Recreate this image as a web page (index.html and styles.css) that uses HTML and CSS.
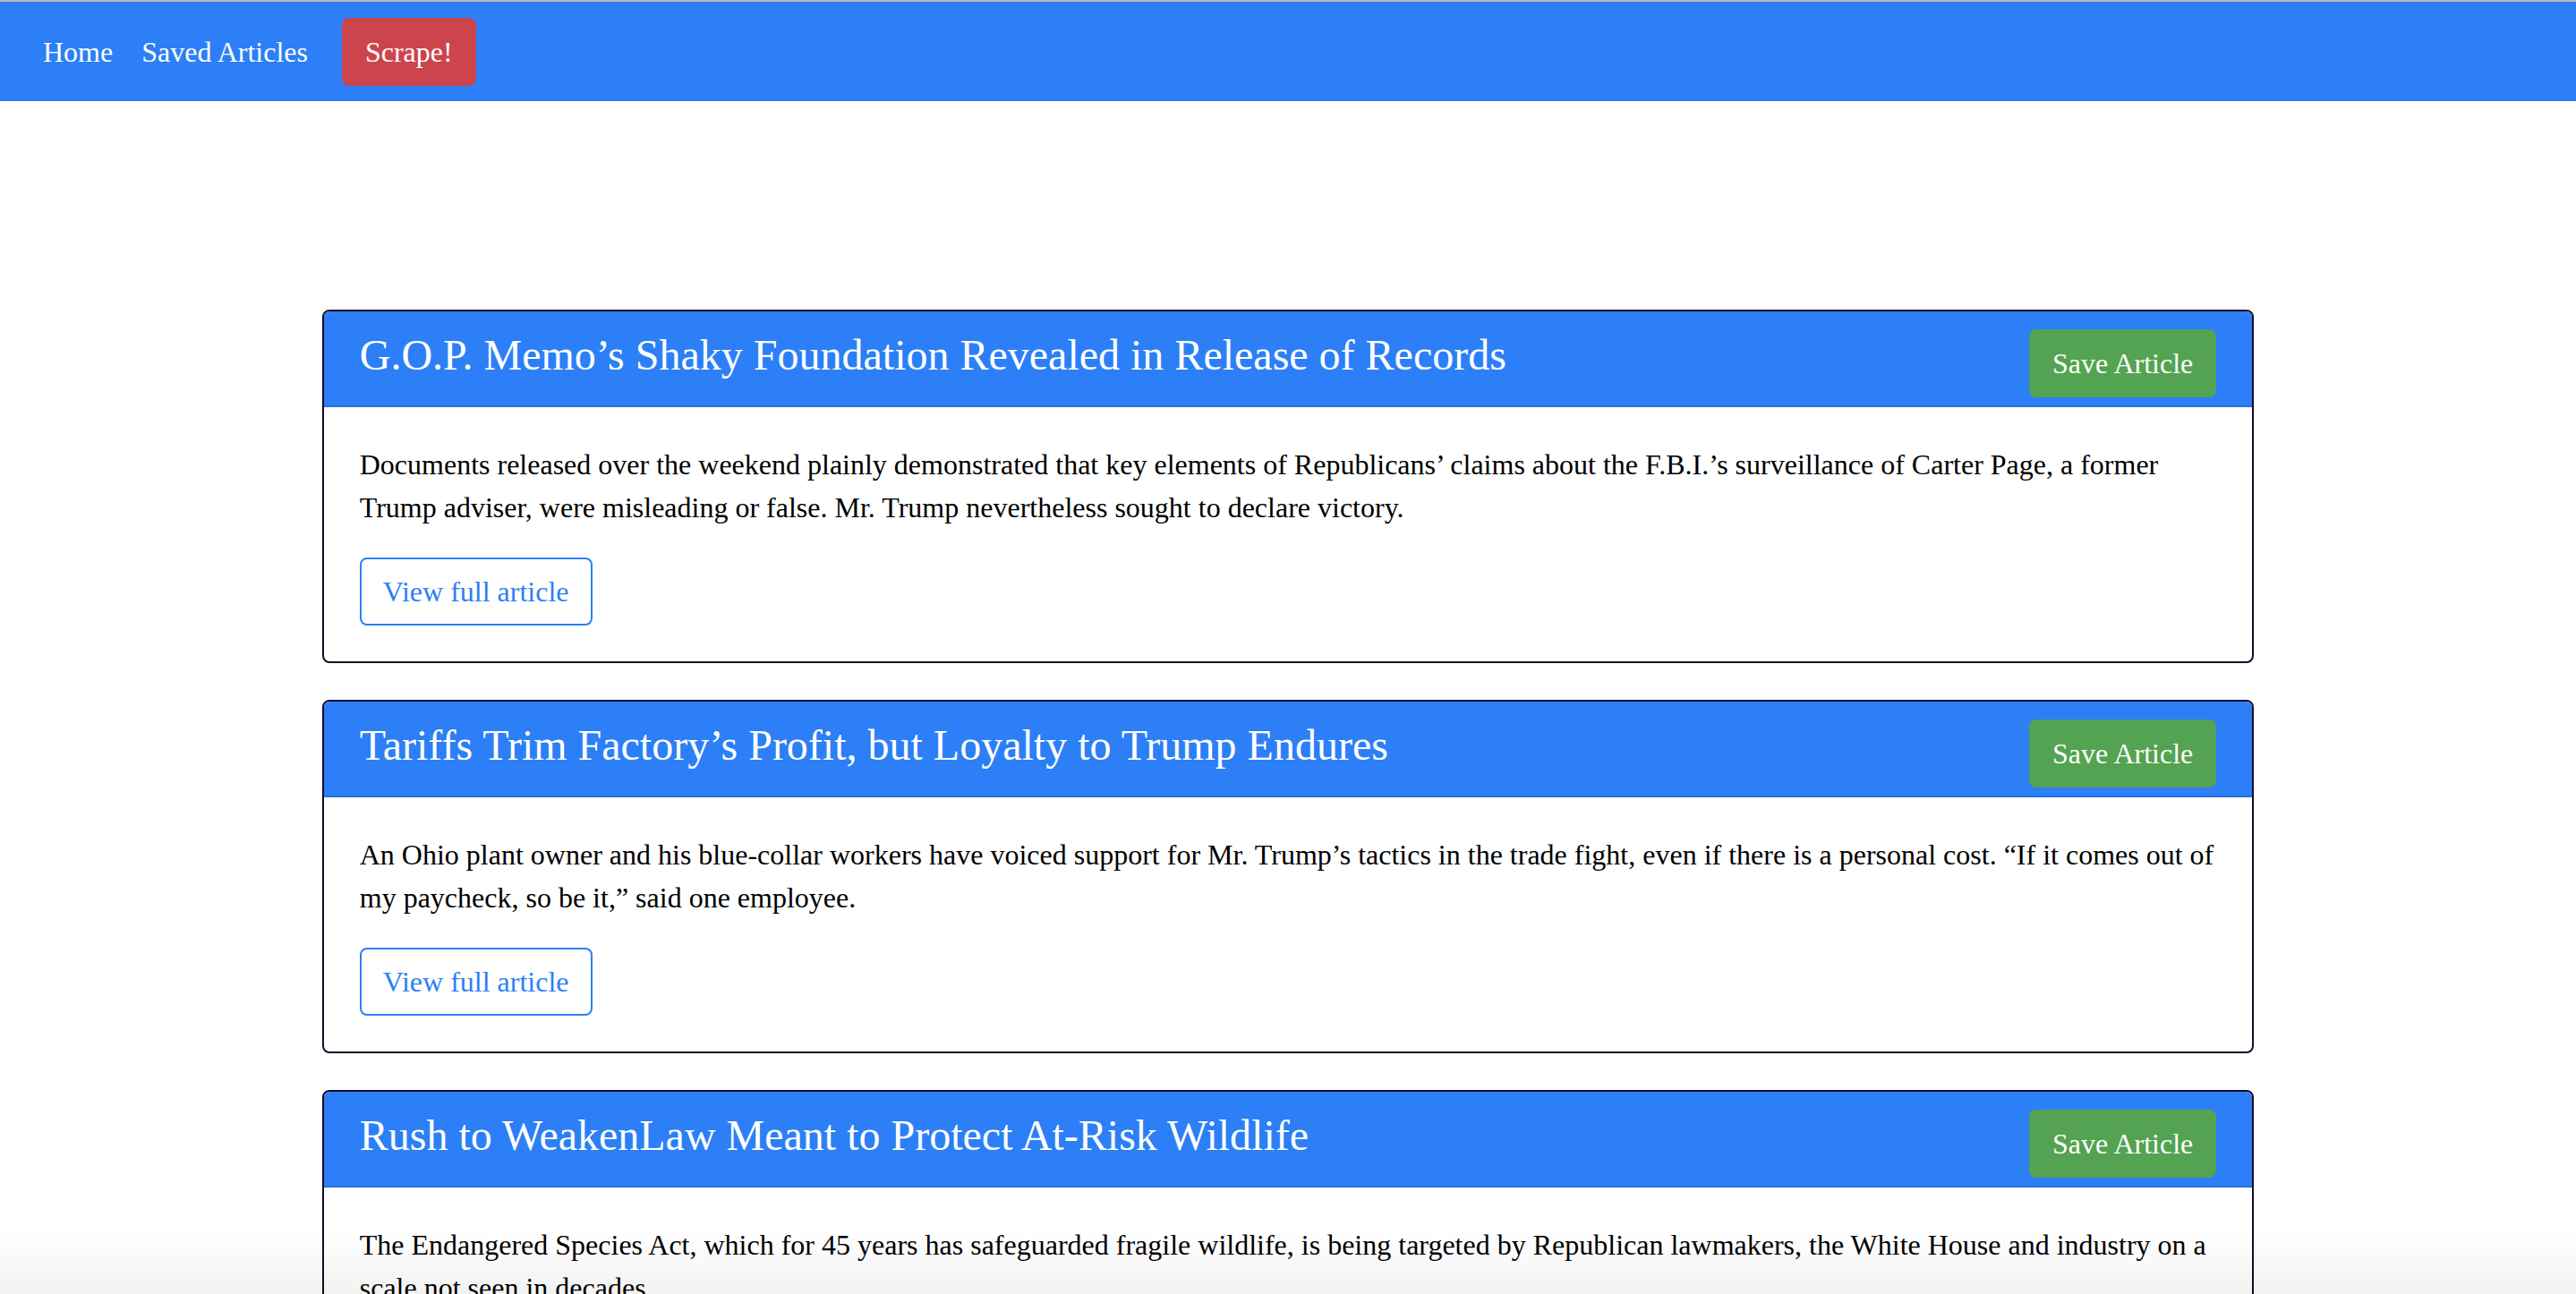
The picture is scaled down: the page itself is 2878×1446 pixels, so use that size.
FILE: index.html
```html
<!DOCTYPE html>
<html lang="en">
<head>
<meta charset="utf-8">
<title>News Scraper</title>
<link rel="stylesheet" href="styles.css">
</head>
<body>
<nav class="navbar">
  <a class="nav-link" href="#">Home</a>
  <a class="nav-link" href="#">Saved Articles</a>
  <button class="btn btn-danger scrape">Scrape!</button>
</nav>
<main class="articles">
  <div class="card">
    <div class="card-header">
      <h4 class="card-title">G.O.P. Memo’s Shaky Foundation Revealed in Release of Records</h4>
      <button class="btn btn-success">Save Article</button>
    </div>
    <div class="card-body">
      <p class="card-text">Documents released over the weekend plainly demonstrated that key elements of Republicans’ claims about the F.B.I.’s surveillance of Carter Page, a former Trump adviser, were misleading or false. Mr. Trump nevertheless sought to declare victory.</p>
      <a class="btn btn-outline" href="#">View full article</a>
    </div>
  </div>
  <div class="card">
    <div class="card-header">
      <h4 class="card-title">Tariffs Trim Factory’s Profit, but Loyalty to Trump Endures</h4>
      <button class="btn btn-success">Save Article</button>
    </div>
    <div class="card-body">
      <p class="card-text">An Ohio plant owner and his blue-collar workers have voiced support for Mr. Trump’s tactics in the trade fight, even if there is a personal cost. “If it comes out of my paycheck, so be it,” said one employee.</p>
      <a class="btn btn-outline" href="#">View full article</a>
    </div>
  </div>
  <div class="card">
    <div class="card-header">
      <h4 class="card-title">Rush to WeakenLaw Meant to Protect At-Risk Wildlife</h4>
      <button class="btn btn-success">Save Article</button>
    </div>
    <div class="card-body">
      <p class="card-text">The Endangered Species Act, which for 45 years has safeguarded fragile wildlife, is being targeted by Republican lawmakers, the White House and industry on a scale not seen in decades.</p>
      <a class="btn btn-outline" href="#">View full article</a>
    </div>
  </div>
</main>
<div class="bottom-shade"></div>
</body>
</html>
```
FILE: styles.css
```css
* { box-sizing: border-box; }

html, body {
  margin: 0;
  padding: 0;
}

body {
  font-family: "Liberation Serif", "Times New Roman", serif;
  font-size: 32px;
  line-height: 48px;
  color: #000;
  background: #fff;
  border-top: 2px solid #b9b9b9;
}

.navbar {
  display: flex;
  align-items: center;
  height: 111px;
  padding: 0 32px;
  background: #2c7ff6;
}

.nav-link {
  color: #fff;
  text-decoration: none;
  padding: 16px 16px;
  line-height: 48px;
  font-size: 32px;
}

.btn {
  display: inline-block;
  font-family: inherit;
  font-size: 32px;
  line-height: 48px;
  padding: 12px 24px;
  border: 2px solid transparent;
  border-radius: 8px;
  text-decoration: none;
  cursor: pointer;
  white-space: nowrap;
}

.btn-danger {
  background: #cc454c;
  border-color: #cc454c;
  color: #fff;
}

.scrape {
  margin-left: 22px;
}

.btn-success {
  background: #54a352;
  border-color: #54a352;
  color: #fff;
}

.btn-outline {
  background: #fff;
  color: #2c7ff6;
  border-color: #2c7ff6;
}

.articles {
  width: 75%;
  margin: 233px auto 0;
}

.card {
  border: 2px solid #170b26;
  border-radius: 8px;
  margin-bottom: 41px;
  overflow: hidden;
}

.card-header {
  display: flex;
  justify-content: space-between;
  align-items: flex-start;
  padding: 20px 40px 9px;
  background: #2c7ff6;
  border-bottom: 2px solid #276fd7;
}

.card-title {
  margin: 0;
  font-size: 48px;
  line-height: 58px;
  font-weight: normal;
  color: #fff;
}

.card-body {
  padding: 40px;
}

.card-text {
  margin: 0 0 32px;
}

.bottom-shade {
  position: fixed;
  left: 0;
  right: 0;
  bottom: 0;
  height: 70px;
  background: linear-gradient(to bottom, rgba(0,0,0,0), rgba(0,0,0,0.05));
  pointer-events: none;
}
```
